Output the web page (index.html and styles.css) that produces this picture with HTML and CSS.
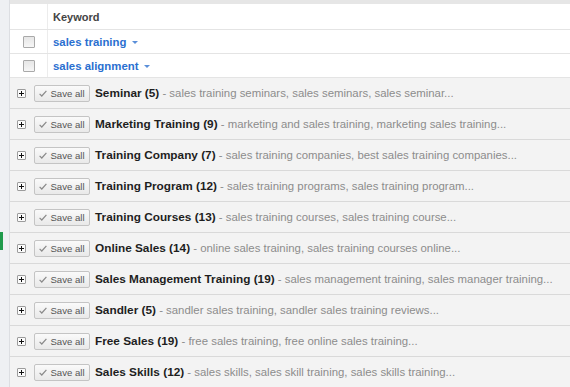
FILE: index.html
```html
<!DOCTYPE html>
<html lang="en">
<head>
    <meta charset="UTF-8">
    <title>Keyword groups</title>
    <link rel="stylesheet" href="styles.css">
</head>
<body>
    <div class="page">
        <div class="sidebar">
            <div class="sidebar-mark"></div>
        </div>
        <main class="main">
            <div class="topbar"></div>

            <!-- Keyword table -->
            <div class="kw-row kw-head">
                <div class="kw-check"></div>
                <div class="kw-cell">Keyword</div>
            </div>
            <div class="kw-row">
                <div class="kw-check"><span class="checkbox"></span></div>
                <div class="kw-cell"><a class="kw-link">sales training</a><span class="caret"></span></div>
            </div>
            <div class="kw-row">
                <div class="kw-check"><span class="checkbox"></span></div>
                <div class="kw-cell"><a class="kw-link">sales alignment</a><span class="caret"></span></div>
            </div>

            <!-- Ad groups -->
            <div id="groups"></div>
        </main>
    </div>

    <script>
        const groups = [
            ['Seminar (5)', 'sales training seminars, sales seminars, sales seminar...'],
            ['Marketing Training (9)', 'marketing and sales training, marketing sales training...'],
            ['Training Company (7)', 'sales training companies, best sales training companies...'],
            ['Training Program (12)', 'sales training programs, sales training program...'],
            ['Training Courses (13)', 'sales training courses, sales training course...'],
            ['Online Sales (14)', 'online sales training, sales training courses online...'],
            ['Sales Management Training (19)', 'sales management training, sales manager training...'],
            ['Sandler (5)', 'sandler sales training, sandler sales training reviews...'],
            ['Free Sales (19)', 'free sales training, free online sales training...'],
            ['Sales Skills (12)', 'sales skills, sales skill training, sales skills training...']
        ];

        const container = document.getElementById('groups');

        groups.forEach(([title, words]) => {
            const row = document.createElement('div');
            row.className = 'group-row';
            row.innerHTML =
                '<span class="expand"></span>' +
                '<button class="save-btn"><svg class="tick" width="8" height="7" viewBox="0 0 8 7">' +
                '<path d="M0.6 3.8 L2.8 6 L7.4 0.8" fill="none" stroke="#8a8a8a" stroke-width="1.2"/></svg>Save all</button>' +
                '<span class="group-title">' + title + '</span>' +
                '<span class="group-words">&nbsp;- ' + words + '</span>';
            container.appendChild(row);
        });
    </script>
</body>
</html>
```

FILE: styles.css
```css
/* General */
body {
    margin: 0;
    font-family: 'Liberation Sans', Arial, sans-serif;
    color: #222;
    background-color: #fff;
    overflow: hidden;
}

.page {
    display: flex;
    height: 387px;
}

/* Left strip */
.sidebar {
    width: 9px;
    flex-shrink: 0;
    background-color: #eef0f3;
    border-right: 1px solid #dcdee2;
    padding-top: 232px;
}

.sidebar-mark {
    width: 3px;
    height: 18px;
    background-color: #1f9a4c;
}

.main {
    flex: 1;
    min-width: 0;
}

.topbar {
    height: 4px;
    background-color: #e6e6e6;
}

/* Keyword table */
.kw-row {
    display: flex;
    height: 23px;
    border-bottom: 1px solid #e4e4e4;
}

.kw-head {
    height: 25px;
}

.kw-check {
    width: 37px;
    border-right: 1px solid #ececec;
    display: flex;
    align-items: center;
    justify-content: center;
}

.kw-cell {
    display: flex;
    align-items: center;
    padding-left: 5px;
    font-size: 11px;
    font-weight: bold;
    color: #444;
}

.checkbox {
    width: 10px;
    height: 10px;
    border: 1px solid #a9a9a9;
    border-radius: 1px;
    background: linear-gradient(#e6e6e6, #f6f6f6);
}

.kw-link {
    color: #2a6fd0;
    font-size: 11.4px;
}

.caret {
    width: 0;
    height: 0;
    margin-left: 6px;
    margin-top: 1px;
    border-left: 3px solid transparent;
    border-right: 3px solid transparent;
    border-top: 3px solid #5b8fd9;
}

/* Ad group rows */
.group-row {
    display: flex;
    align-items: center;
    height: 30px;
    padding-left: 7px;
    background-color: #f3f3f3;
    border-bottom: 1px solid #d9d9d9;
    white-space: nowrap;
}

.expand {
    position: relative;
    width: 7px;
    height: 7px;
    border: 1px solid #9c9c9c;
    border-radius: 1px;
    background-color: #fbfbfb;
    flex-shrink: 0;
}

.expand::before,
.expand::after {
    content: "";
    position: absolute;
    background-color: #111;
}

.expand::before {
    left: 1px;
    top: 3px;
    width: 5px;
    height: 1px;
}

.expand::after {
    left: 3px;
    top: 1px;
    width: 1px;
    height: 5px;
}

.save-btn {
    display: flex;
    align-items: center;
    justify-content: center;
    gap: 3px;
    margin-left: 8px;
    width: 56px;
    height: 17px;
    padding: 0;
    border: 1px solid #c4c4c4;
    border-radius: 2px;
    background: linear-gradient(#fafafa, #e9e9e9);
    font-family: 'Liberation Sans', Arial, sans-serif;
    font-size: 9.6px;
    color: #555;
    box-sizing: border-box;
}

.tick {
    flex-shrink: 0;
}

.group-title {
    margin-left: 5px;
    font-size: 11.8px;
    font-weight: bold;
    color: #1e1e1e;
}

.group-words {
    font-size: 11.4px;
    color: #8c8c8c;
}
```
